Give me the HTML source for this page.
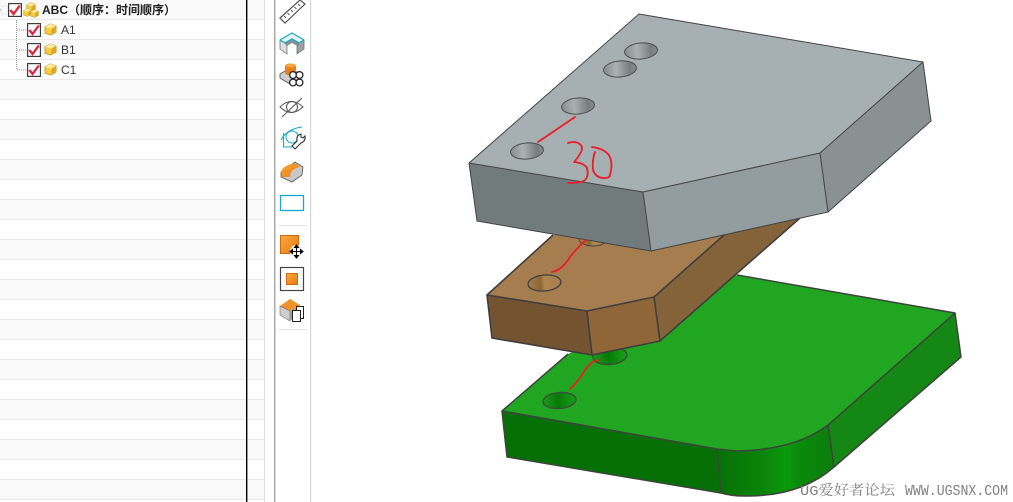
<!DOCTYPE html>
<html><head><meta charset="utf-8"><style>
html,body{margin:0;padding:0;background:#fff;width:1013px;height:502px;overflow:hidden}
svg{position:absolute;left:0;top:0}
</style></head><body>
<svg width="1013" height="502" viewBox="0 0 1013 502" xmlns="http://www.w3.org/2000/svg">
<defs>
<symbol id="chk" viewBox="0 0 14 14" overflow="visible"><rect x=".6" y=".6" width="12.800" height="12.800" fill="#fff" stroke="#3c3c3c" stroke-width="1.200"/><path d="M2.300 7 L5.500 11 L11.800 2.500" fill="none" stroke="#e8203c" stroke-width="2.300"/></symbol>
<symbol id="cube" viewBox="0 0 14 14" overflow="visible"><path d="M1 4 L7 1 L13 3 L13 10 L7 13 L1 11Z" fill="#f6cc3e" stroke="#b8922a" stroke-width=".8"/><path d="M1 4 L7 1 L13 3 L8 6Z" fill="#fdee9e"/><path d="M8 6 L13 3 L13 10 L8 13Z" fill="#dca827"/></symbol>
<linearGradient id="hg" x1="0" x2="1" y1="0" y2="0"><stop offset="0" stop-color="#838c8d"/><stop offset=".38" stop-color="#aab2b3"/><stop offset=".8" stop-color="#767e7f"/><stop offset="1" stop-color="#858e8f"/></linearGradient>
<linearGradient id="hb" x1="0" x2="1" y1="0" y2="0"><stop offset="0" stop-color="#a67e50"/><stop offset=".38" stop-color="#8a6636"/><stop offset=".5" stop-color="#b08650"/><stop offset="1" stop-color="#a67d4f"/></linearGradient>
<linearGradient id="hgr" x1="0" x2="1" y1="0" y2="0"><stop offset="0" stop-color="#1c9a1c"/><stop offset=".45" stop-color="#067a06"/><stop offset=".7" stop-color="#0f8c10"/><stop offset="1" stop-color="#16a016"/></linearGradient>
<linearGradient id="fil" gradientUnits="userSpaceOnUse" x1="717" x2="834" y1="0" y2="0"><stop offset="0" stop-color="#067006"/><stop offset=".4" stop-color="#0a840a"/><stop offset=".58" stop-color="#0a9a0a"/><stop offset=".7" stop-color="#0a8a0a"/><stop offset="1" stop-color="#0c7c0c"/></linearGradient>
<linearGradient id="org" x1="0" x2="1" y1="0" y2="1"><stop offset="0" stop-color="#f9a83a"/><stop offset="1" stop-color="#e87c10"/></linearGradient>
</defs>

<!-- tree rows -->
<g fill="#f9f9f9">
<rect x="0" y="0" width="265" height="20"/><rect x="0" y="40" width="265" height="20"/><rect x="0" y="80" width="265" height="20"/><rect x="0" y="120" width="265" height="20"/><rect x="0" y="160" width="265" height="20"/><rect x="0" y="200" width="265" height="20"/><rect x="0" y="240" width="265" height="20"/><rect x="0" y="280" width="265" height="20"/><rect x="0" y="320" width="265" height="20"/><rect x="0" y="360" width="265" height="20"/><rect x="0" y="400" width="265" height="20"/><rect x="0" y="440" width="265" height="20"/><rect x="0" y="480" width="265" height="20"/>
</g>
<g fill="#e9e9e9">
<rect x="0" y="19" width="265" height="1"/><rect x="0" y="39" width="265" height="1"/><rect x="0" y="59" width="265" height="1"/><rect x="0" y="79" width="265" height="1"/><rect x="0" y="99" width="265" height="1"/><rect x="0" y="119" width="265" height="1"/><rect x="0" y="139" width="265" height="1"/><rect x="0" y="159" width="265" height="1"/><rect x="0" y="179" width="265" height="1"/><rect x="0" y="199" width="265" height="1"/><rect x="0" y="219" width="265" height="1"/><rect x="0" y="239" width="265" height="1"/><rect x="0" y="259" width="265" height="1"/><rect x="0" y="279" width="265" height="1"/><rect x="0" y="299" width="265" height="1"/><rect x="0" y="319" width="265" height="1"/><rect x="0" y="339" width="265" height="1"/><rect x="0" y="359" width="265" height="1"/><rect x="0" y="379" width="265" height="1"/><rect x="0" y="399" width="265" height="1"/><rect x="0" y="419" width="265" height="1"/><rect x="0" y="439" width="265" height="1"/><rect x="0" y="459" width="265" height="1"/><rect x="0" y="479" width="265" height="1"/><rect x="0" y="499" width="265" height="1"/>
</g>
<rect x="246" y="0" width="1.400" height="502" fill="#000"/>
<rect x="264" y="0" width="1" height="502" fill="#dcdcdc"/>
<rect x="274" y="0" width="1.500" height="502" fill="#a8a8a8"/>
<rect x="310" y="0" width="1.200" height="502" fill="#d8d8d8"/>

<!-- tree content -->
<path d="M16.500 20V70 M17 30H26 M17 50H26 M17 70H26 M0 10H6" stroke="#999" stroke-width="1" stroke-dasharray="1 1" fill="none"/>
<rect x="2" y="6" width="5" height="8" fill="#fff" stroke="#ddd" stroke-width=".6"/>
<use href="#chk" x="8" y="3" width="14" height="14"/>
<use href="#cube" x="26" y="2" width="10" height="10"/><use href="#cube" x="23" y="8" width="9" height="9"/><use href="#cube" x="30" y="9" width="9" height="9"/>
<text x="42" y="14" font-family="'Liberation Sans','Noto Sans CJK SC',sans-serif" font-size="12" font-weight="bold" fill="#222">ABC（顺序：时间顺序）</text>
<use href="#chk" x="27" y="23" width="14" height="14"/><use href="#cube" x="44" y="23" width="13" height="13"/>
<text x="61" y="34" font-family="'Liberation Sans',sans-serif" font-size="12" fill="#333">A1</text>
<use href="#chk" x="27" y="43" width="14" height="14"/><use href="#cube" x="44" y="43" width="13" height="13"/>
<text x="61" y="54" font-family="'Liberation Sans',sans-serif" font-size="12" fill="#333">B1</text>
<use href="#chk" x="27" y="63" width="14" height="14"/><use href="#cube" x="44" y="63" width="13" height="13"/>
<text x="61" y="74" font-family="'Liberation Sans',sans-serif" font-size="12" fill="#333">C1</text>

<!-- toolbar icons -->
<g transform="translate(270,0)">
<!-- ruler -->
<path d="M10 18 L30 0 L35 4 L15 23Z" fill="#fff" stroke="#555" stroke-width="1.200"/>
<path d="M14 16l2 2M17.500 13l2 2M21 10l2 2M24.500 7l2 2M28 4l2 2" stroke="#555" stroke-width=".9"/>
<!-- block with cyan -->
<path d="M10 40 V49 L17 54 V46 L15 43Z" fill="#dcdfe0" stroke="#666" stroke-width=".7"/>
<path d="M34 40 V49 L27 54 V46 L29 43Z" fill="#9da2a5" stroke="#666" stroke-width=".7"/>
<path d="M15 43 L22 39 L29 43 L27 46 L22 43 L17 46Z" fill="#8b9093"/>
<path d="M10 40 L22 33 L34 40 L29 43 L22 39 L15 43Z" fill="#e8f6fa" stroke="#18a8cc" stroke-width="1.300" stroke-linejoin="round"/>
<!-- features -->
<path d="M10 74 L20 68 L30 74 L30 78 L20 84 L10 78Z" fill="#cfcfcf" stroke="#555" stroke-width=".9"/>
<rect x="15" y="64" width="11" height="11" rx="2.500" fill="#ea8118"/><ellipse cx="20.500" cy="65.500" rx="5.500" ry="2" fill="#f7a440"/>
<g fill="#fff" stroke="#222" stroke-width="1.300"><circle cx="23" cy="75" r="3.400"/><circle cx="29.500" cy="75" r="3.400"/><circle cx="23" cy="82.500" r="3.400"/><circle cx="29.500" cy="82.500" r="3.400"/></g>
<!-- eye -->
<path d="M10 107 Q21 96 33 107 Q21 118 10 107Z" fill="none" stroke="#555" stroke-width="1"/>
<circle cx="22" cy="107" r="5.500" fill="none" stroke="#555" stroke-width="1"/>
<path d="M12 117 L32 98" stroke="#555" stroke-width="1"/>
<!-- wrench -->
<path d="M11 140 Q17 129 32 127 M13.500 133V147H22" fill="none" stroke="#18a8cc" stroke-width="1.100"/>
<circle cx="22" cy="137" r="6" fill="none" stroke="#18a8cc" stroke-width="1"/>
<path d="M22 146 L27 141 Q26 135 31 134 L31 137 L33 138 L35 136 Q36 141 31 143 L25 149 Z" fill="#fff" stroke="#333" stroke-width="1.100"/>
<!-- orange block -->
<path d="M11 172 L25 162 L33 167 L32 175 L22 182 L11 177Z" fill="#c8c8c8" stroke="#555" stroke-width=".8"/>
<path d="M11 172 Q12 166 25 163 L30 167 Q20 169 20 177 L12 177Z" fill="url(#org)"/>
<!-- cyan rect -->
<rect x="10.500" y="195.500" width="23" height="15" fill="#fff" stroke="#18a8cc" stroke-width="1.300"/>
<rect x="9" y="225" width="27" height="1" fill="#e0e0e0"/>
<!-- orange square + move cursor -->
<rect x="10.500" y="235.500" width="18" height="18" fill="url(#org)" stroke="#c96a10"/>
<circle cx="26.500" cy="251.500" r="6.500" fill="#fff"/>
<path d="M26.500 245v13M20 251.500h13M26.500 245l-2 2.500h4zM26.500 258l-2-2.500h4zM20 251.500l2.500-2v4zM33 251.500l-2.500-2v4z" stroke="#000" stroke-width="1.100" fill="#000"/>
<!-- square in square -->
<rect x="10.500" y="267.500" width="23" height="23" fill="#fff" stroke="#444" stroke-width="1.200"/>
<rect x="16.500" y="273.500" width="11" height="11" fill="url(#org)" stroke="#d06a10"/>
<!-- cube copies -->
<path d="M10 306 L20 299 L30 305 L20 311Z" fill="#f0922a"/><path d="M10 306 L20 311 V321 L10 315Z" fill="#cfcfcf" stroke="#666" stroke-width=".6"/><path d="M20 311 L30 305 V312 L20 321Z" fill="#9a9a9a"/>
<rect x="26.500" y="306.500" width="7" height="12" fill="#fff" stroke="#222"/>
<rect x="22.500" y="310.500" width="8" height="11" fill="#fff" stroke="#222"/>
<rect x="9" y="329" width="27" height="1" fill="#e0e0e0"/>
</g>

<!-- GREEN PLATE -->
<path d="M502 411 L507 457 L721 493 Q732 496 743 496 Q800 497 834 467 L961 357 L955 313 L828 425 Q795 450 737 451 Z" fill="#067006"/>
<path d="M717 449 L721 493 Q732 496 743 496 Q800 497 834 467 L828 425 Q795 450 737 451Z" fill="url(#fil)"/>
<path d="M828 425 L834 467 L961 357 L955 313Z" fill="#158714"/>
<path d="M502 411 L568 354 L737 275 L955 313 L828 425 Q795 450 737 451 L717 449Z" fill="#21a622"/>
<g fill="none" stroke="#3c443c" stroke-width="1.500" stroke-linejoin="round">
<path d="M568 354 L502 411 L717 449 L737 451 Q795 450 828 425 L955 313 L961 357 L834 467 Q800 497 743 496 Q732 496 721 493 L507 457 L502 411"/>
<path d="M737 275 L955 313 M717 449 L721 493 M828 425 L834 467"/>
</g>
<ellipse cx="559.500" cy="400.500" rx="16.500" ry="8" transform="rotate(-5 559.500 400.500)" fill="url(#hgr)" stroke="#3c4c3c" stroke-width="1.400"/>
<ellipse cx="610" cy="356" rx="17" ry="8.500" transform="rotate(-5 610 356)" fill="url(#hgr)" stroke="#3c4c3c" stroke-width="1.400"/>

<!-- BROWN -->
<path d="M487 295 L553 235 L800 218 L660 341 L592 355 L492 338Z" fill="#85623a"/>
<path d="M487 295 L587 311 L592 355 L492 338Z" fill="#745331"/>
<path d="M587 311 L654 297 L660 341 L592 355Z" fill="#906639"/>
<path d="M654 297 L724 235 L800 218 L660 341Z" fill="#85633a"/>
<path d="M487 295 L553 235 L724 235 L654 297 L587 311Z" fill="#a67d4f"/>
<g fill="none" stroke="#3e3e3e" stroke-width="1.600" stroke-linejoin="round">
<path d="M553 235 L487 295 L492 338 L592 355 L660 341 L800 218"/>
<path d="M487 295 L587 311 L654 297 L724 235 M587 311 L592 355 M654 297 L660 341"/>
</g>
<ellipse cx="544.500" cy="283" rx="16.500" ry="8" transform="rotate(-5 544.500 283)" fill="url(#hb)" stroke="#444" stroke-width="1.400"/>
<ellipse cx="593" cy="239" rx="14" ry="7" fill="url(#hb)" stroke="#444" stroke-width="1"/>

<!-- GREY TOP -->
<path d="M469 163 L477 221 L651 251 L828 212 L931 121 L923 62 L820 153 L643 192Z" fill="#727b7c"/>
<path d="M643 192 L820 153 L828 212 L651 251Z" fill="#939c9e"/>
<path d="M820 153 L923 62 L931 121 L828 212Z" fill="#899192"/>
<path d="M639 14 L923 62 L820 153 L643 192 L469 163Z" fill="#a6afb1"/>
<g fill="none" stroke="#444" stroke-width="1" stroke-linejoin="round">
<path d="M639 14 L923 62 L931 121 L828 212 L651 251 L477 221 L469 163 Z"/>
<path d="M469 163 L643 192 L820 153 L923 62 M643 192 L651 251 M820 153 L828 212"/>
</g>
<ellipse cx="527" cy="151" rx="16.500" ry="8" transform="rotate(-5 527 151)" fill="url(#hg)" stroke="#4a4f50" stroke-width="1"/>
<ellipse cx="578" cy="106" rx="16.500" ry="8" transform="rotate(-5 578 106)" fill="url(#hg)" stroke="#4a4f50" stroke-width="1"/>
<ellipse cx="620" cy="69" rx="16.500" ry="8" transform="rotate(-5 620 69)" fill="url(#hg)" stroke="#4a4f50" stroke-width="1"/>
<ellipse cx="641" cy="51" rx="16.500" ry="8" transform="rotate(-5 641 51)" fill="url(#hg)" stroke="#4a4f50" stroke-width="1"/>

<!-- red annotations -->
<g fill="none" stroke="#ee1c25" stroke-width="1.800" stroke-linecap="round" stroke-linejoin="round">
<path d="M538 142 L575 117"/>
<path d="M568 143 Q574 141 578 143 Q584 146 581 152 Q578 158 574 162 Q584 163 587 168 Q589 176 585 180 Q582 183 568 183"/>
<path d="M595 152 Q592 160 593 170 Q596 178 604 178 Q610 178 610 175 Q613 165 610 157 Q606 149 592 147"/>
<path d="M586 240 Q578 247 570 257 Q562 270 552 272"/>
<path d="M598 360 Q590 362 585 370 Q578 382 570 389"/>
</g>

<!-- watermark -->
<text x="800" y="495" font-family="'Liberation Mono','Noto Serif CJK SC',monospace" font-size="14" fill="#808080" textLength="95" lengthAdjust="spacingAndGlyphs">UG爱好者论坛</text>
<text x="905" y="495" font-family="'Liberation Mono',monospace" font-size="15" fill="#808080" textLength="103" lengthAdjust="spacingAndGlyphs">WWW.UGSNX.COM</text>
</svg>
</body></html>
